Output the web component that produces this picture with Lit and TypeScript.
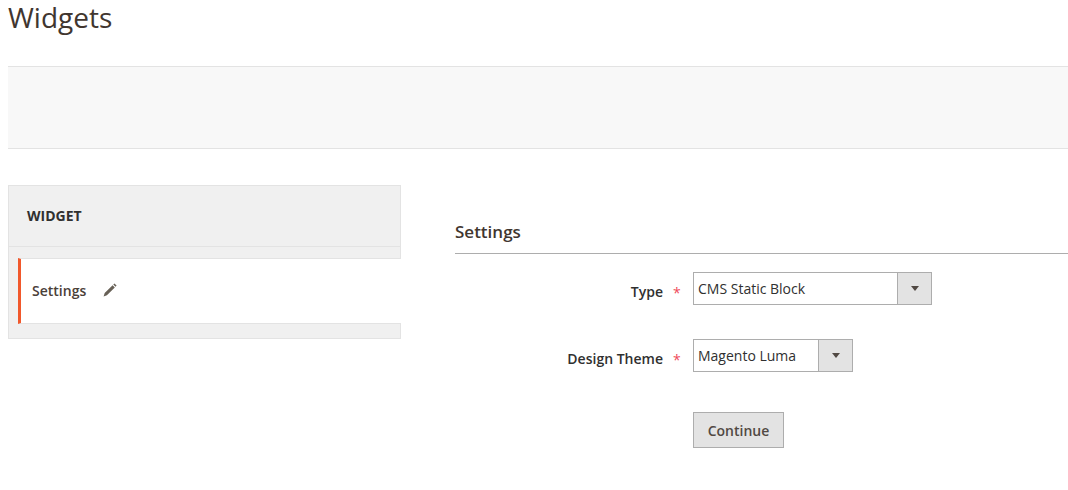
import { LitElement, html, css } from "lit";
import { customElement } from "lit/decorators.js";

@customElement("app-root")
export class AppRoot extends LitElement {
  static styles = css`
    :host {
      display: block;
      width: 1068px;
      height: 490px;
      overflow: hidden;
      background: #fff;
      font-family: "Open Sans", sans-serif;
      color: #303030;
      font-size: 14px;
      box-sizing: border-box;
      padding-left: 8px;
    }
    * { box-sizing: border-box; }
    h1 {
      margin: 0;
      height: 66px;
      font-weight: 400;
      font-size: 28px;
      line-height: 35px;
      color: #41362f;
    }
    .actions {
      height: 83px;
      background: #f8f8f8;
      border-top: 1px solid #e3e3e3;
      border-bottom: 1px solid #e3e3e3;
    }
    .main {
      display: flex;
      margin-top: 36px;
    }
    .side {
      width: 393px;
      height: 154px;
      flex: none;
      background: #f0f0f0;
      border: 1px solid #e3e3e3;
      display: flex;
      flex-direction: column;
    }
    .side-title {
      height: 61px;
      flex: none;
      border-bottom: 1px solid #e3e3e3;
      padding: 0 0 2px 18px;
      display: flex;
      align-items: center;
      font-weight: 700;
      font-size: 14px;
      color: #303030;
    }
    .tab {
      margin-top: 11px;
      margin-right: -1px;
      height: 66px;
      margin-left: 9px;
      background: #fff;
      border-top: 1px solid #e3e3e3;
      border-bottom: 1px solid #e3e3e3;
      border-left: 3px solid #f1582b;
      padding: 0 0 2px 11px;
      display: flex;
      align-items: center;
      gap: 16px;
      font-weight: 600;
      font-size: 14px;
      color: #4a4038;
    }
    .tab svg { display: block; width: 16px; height: 16px; }
    .content {
      margin-left: 54px;
      flex: 1;
      min-width: 0;
      padding-top: 34px;
    }
    h2 {
      margin: 0;
      height: 35px;
      font-size: 17px;
      line-height: 26px;
      font-weight: 600;
      color: #41362f;
      border-bottom: 1px solid #adadad;
    }
    .field {
      display: flex;
      align-items: center;
      height: 33px;
    }
    .f1 { margin-top: 18px; }
    .f2 { margin-top: 34px; }
    .label {
      width: 208px;
      flex: none;
      text-align: right;
      font-weight: 600;
      font-size: 14px;
      color: #303030;
      padding-top: 6px;
    }
    .star {
      width: 30px;
      flex: none;
      padding-left: 10px;
      padding-top: 8px;
      color: #ef4a5a;
      font-size: 14px;
      line-height: 20px;
    }
    .select {
      display: flex;
      height: 33px;
      border: 1px solid #adadad;
      background: #fff;
    }
    .s1 { width: 239px; }
    .s2 { width: 160px; }
    .value {
      flex: 1;
      padding: 0 0 1px 4px;
      display: flex;
      align-items: center;
      font-size: 14px;
      color: #303030;
    }
    .arrow {
      width: 34px;
      flex: none;
      background: #e3e3e3;
      border-left: 1px solid #adadad;
      display: flex;
      align-items: center;
      justify-content: center;
    }
    .arrow i {
      display: block;
      width: 0;
      height: 0;
      border-left: 4px solid transparent;
      border-right: 4px solid transparent;
      border-top: 5px solid #514943;
    }
    .actions-row {
      margin-top: 40px;
      padding-left: 238px;
    }
    button {
      display: block;
      width: 91px;
      height: 36px;
      padding: 0;
      background: #e3e3e3;
      border: 1px solid #adadad;
      font-family: inherit;
      font-size: 14px;
      font-weight: 600;
      color: #514943;
    }
  `;

  render() {
    return html`
      <h1>Widgets</h1>
      <div class="actions"></div>
      <div class="main">
        <div class="side">
          <div class="side-title">WIDGET</div>
          <div class="tab">
            <span>Settings</span>
            <svg viewBox="0 0 16 16" aria-hidden="true">
              <path fill="#676056" d="M12.4 1.4l2.2 2.2-1.1 1.1-2.2-2.2zM10.6 3.2l2.2 2.2-7.9 7.9-3.3 1.1 1.1-3.3z" />
            </svg>
          </div>
        </div>
        <div class="content">
          <h2>Settings</h2>
          <div class="field f1">
            <div class="label">Type</div>
            <div class="star">*</div>
            <div class="select s1">
              <div class="value">CMS Static Block</div>
              <div class="arrow"><i></i></div>
            </div>
          </div>
          <div class="field f2">
            <div class="label">Design Theme</div>
            <div class="star">*</div>
            <div class="select s2">
              <div class="value">Magento Luma</div>
              <div class="arrow"><i></i></div>
            </div>
          </div>
          <div class="actions-row"><button>Continue</button></div>
        </div>
      </div>
    `;
  }
}
